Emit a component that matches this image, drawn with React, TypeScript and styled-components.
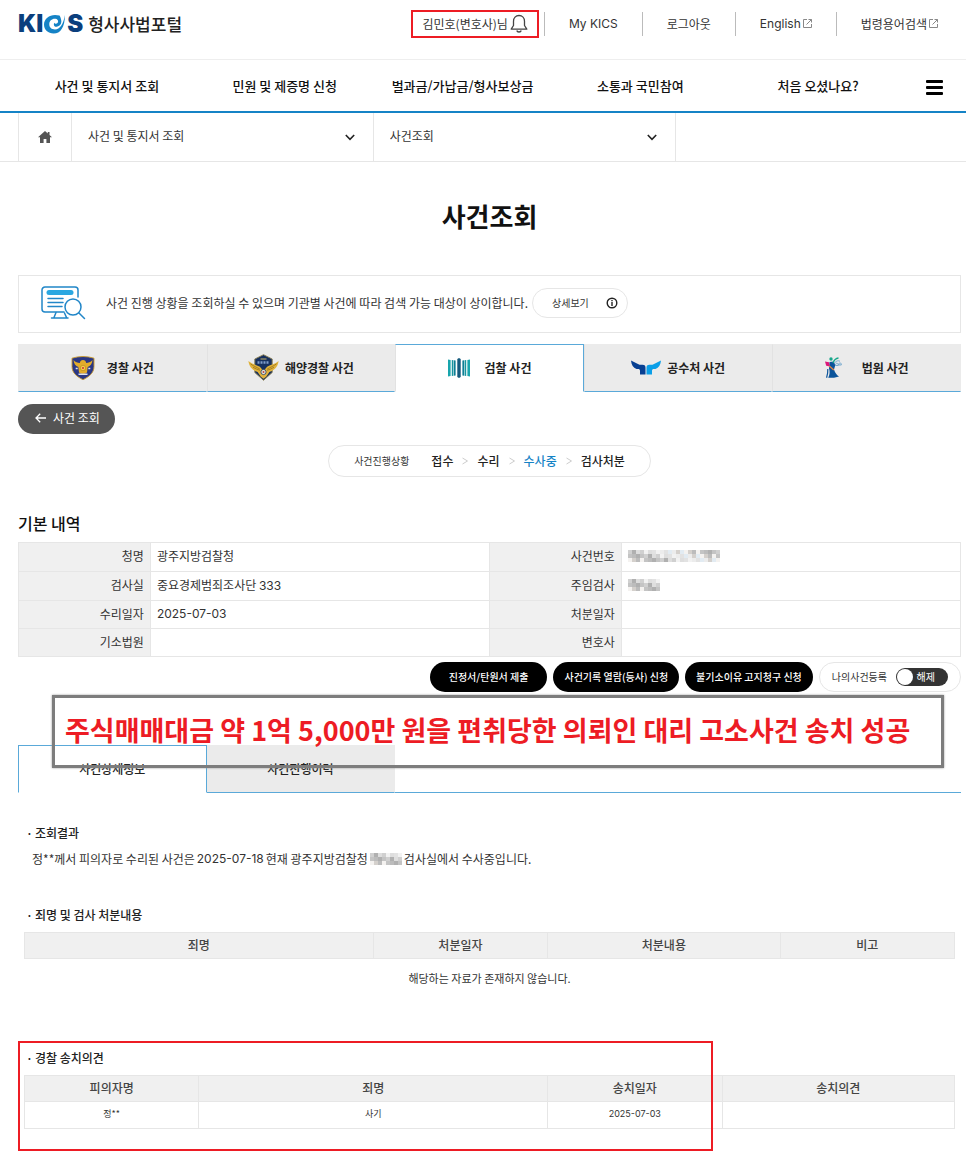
import React from "react";
import styled, { createGlobalStyle, css } from "styled-components";

const GlobalStyle = createGlobalStyle`
  *, *::before, *::after { box-sizing: border-box; }
  body {
    margin: 0;
    background: #fff;
    color: #333;
    font-family: "Noto Sans CJK KR", sans-serif;
    font-size: 12px;
    line-height: 18px;
  }
  button, select, input { font: inherit; color: inherit; margin: 0; }
  button { border: 0; padding: 0; background: none; cursor: pointer; }
  a { color: inherit; text-decoration: none; }
  h1, h2, h3, p, ul { margin: 0; padding: 0; }
  table { border-collapse: collapse; table-layout: fixed; width: 100%; }
  svg { display: block; flex: none; }
`;

const BLUE = "#1583c6";
const TAB_BLUE = "#5aa9d9";
const LINE = "#e6e6e6";
const RED = "#ed1c24";

const Page = styled.div`
  min-width: 900px;
  padding-bottom: 24px;
`;

const Latin = styled.span`
  font-family: Inter, sans-serif;
`;

/* ---------- header ---------- */

const Header = styled.header`
  display: flex;
  align-items: center;
  justify-content: space-between;
  height: 60px;
  padding: 0 28px 12px 18px;
  border-bottom: 1px solid #eee;
`;

const Logo = styled.a`
  display: flex;
  align-items: center;
  gap: 1px;
  color: #0b3f7d;
`;

const LogoLatin = styled.span`
  font: 900 24px/24px Inter, sans-serif;
`;

const LogoName = styled.span`
  margin-left: 4px;
  color: #222;
  font-size: 17px;
  line-height: 24px;
  font-weight: 500;
`;

const Utility = styled.nav`
  display: flex;
  align-items: center;
`;

const UserBox = styled.button`
  display: flex;
  align-items: center;
  gap: 2px;
  height: 28px;
  margin-right: 5px;
  padding: 0 9px;
  border: 2px solid ${RED};
`;

const UtilityLink = styled.a`
  display: flex;
  align-items: center;
  gap: 2px;
  height: 24px;
  padding: 0 24px;
  border-left: 1px solid #bbb;
  &:last-child { padding-right: 0; }
`;

/* ---------- main navigation ---------- */

const MainNav = styled.nav`
  display: grid;
  grid-template-columns: repeat(5, 1fr) 54px;
  align-items: center;
  height: 53px;
  padding: 0 5px 0 18px;
  border-bottom: 2px solid ${BLUE};
`;

const MainNavLink = styled.a`
  color: #111;
  text-align: center;
  font-size: 13px;
  line-height: 20px;
  font-weight: 500;
`;

const MenuButton = styled.button`
  display: grid;
  gap: 3px;
  justify-self: center;
  width: 17px;
  padding-top: 3px;
`;

const MenuBar = styled.span`
  height: 3px;
  border-radius: 1px;
  background: #000;
`;

/* ---------- breadcrumb ---------- */

const Breadcrumb = styled.nav`
  display: flex;
  height: 49px;
  padding: 0 5px 0 18px;
  border-bottom: 1px solid ${LINE};
`;

const HomeLink = styled.a`
  display: grid;
  place-items: center;
  width: 54px;
  border: solid ${LINE};
  border-width: 0 1px;
`;

const CrumbField = styled.label`
  display: flex;
  align-items: center;
  width: 32%;
  padding-right: 18px;
  border-right: 1px solid ${LINE};
`;

const CrumbSelect = styled.select`
  flex: 1;
  height: 46px;
  padding: 0 16px;
  border: 0;
  background: none;
  appearance: none;
  align-self: flex-start;
`;

/* ---------- content ---------- */

const Content = styled.main`
  padding: 0 5px 0 18px;
`;

const PageTitle = styled.h1`
  padding: 34px 0 39px;
  color: #111;
  text-align: center;
  font-size: 26px;
  line-height: 40px;
  font-weight: 700;
`;

const Notice = styled.section`
  display: flex;
  align-items: center;
  height: 58px;
  margin-bottom: 11px;
  padding: 0 0 2px 22px;
  border: 1px solid ${LINE};
`;

const NoticeText = styled.p`
  margin: 0 4px 0 20px;
`;

const DetailButton = styled.button`
  display: flex;
  align-items: center;
  gap: 17px;
  height: 30px;
  padding: 0 9px 0 19px;
  border: 1px solid ${LINE};
  border-radius: 15px;
  font-size: 10px;
`;

const tabShape = css<{ $active?: boolean }>`
  display: flex;
  align-items: center;
  justify-content: center;
  height: 48px;
  padding-bottom: 1px;
  border: 1px solid transparent;
  background: #ebebeb;
  color: #222;
  border-bottom-color: ${TAB_BLUE};
  ${(p) =>
    p.$active &&
    css`
      background: none;
      border-color: ${TAB_BLUE};
      border-bottom-color: transparent;
    `}
`;

const AgencyTabs = styled.div`
  display: grid;
  grid-template-columns: repeat(5, 1fr);
  margin-bottom: 12px;
`;

const AgencyTab = styled.button<{ $active?: boolean; $gap: number }>`
  ${tabShape}
  gap: ${(p) => p.$gap}px;
  font-weight: 700;
  & + & { border-left-color: ${(p) => (p.$active ? TAB_BLUE : "#e2e2e2")}; }
`;

const BackButton = styled.button`
  display: flex;
  align-items: center;
  gap: 7px;
  height: 30px;
  padding: 0 15px 2px 17px;
  border-radius: 15px;
  background: #555;
  color: #fff;
`;

const Progress = styled.div`
  display: flex;
  align-items: center;
  width: fit-content;
  height: 32px;
  margin: 11px auto 34px;
  padding: 0 25px 1px;
  border: 1px solid ${LINE};
  border-radius: 16px;
`;

const ProgressLabel = styled.span`
  margin-right: 22px;
  font-size: 10px;
`;

const Steps = styled.ol`
  display: flex;
  align-items: center;
  gap: 9px;
  margin: 0;
  padding: 0;
  list-style: none;
`;

const Step = styled.li<{ $current?: boolean }>`
  display: flex;
  align-items: center;
  gap: 9px;
  color: ${(p) => (p.$current ? BLUE : "#222")};
  font-weight: 500;
`;

const SectionTitle = styled.h2`
  margin-bottom: 7px;
  color: #111;
  font-size: 16px;
  line-height: 24px;
  font-weight: 500;
`;

const InfoTable = styled.table`
  th, td {
    height: 28px;
    padding: 0 6px 2px;
    border: 1px solid ${LINE};
    line-height: 18px;
  }
  tr:nth-child(-n + 2) > * { height: 29px; }
  th {
    width: 14%;
    background: #f0f0f0;
    text-align: right;
    font-weight: 400;
  }
  td { width: 36%; }
`;

const Actions = styled.div`
  display: flex;
  justify-content: flex-end;
  gap: 6px;
  margin: 5px 0 53px;
`;

const ActionButton = styled.button<{ $wide?: boolean }>`
  height: 30px;
  padding: 0 ${(p) => (p.$wide ? 19 : 11)}px 1px;
  border-radius: 15px;
  background: #000;
  color: #fff;
  font-size: 10px;
  font-weight: 500;
`;

const RegisterField = styled.label`
  display: flex;
  align-items: center;
  gap: 9px;
  height: 30px;
  padding: 0 12px;
  border: 1px solid ${LINE};
  border-radius: 15px;
  font-size: 10px;
`;

const Toggle = styled.span`
  position: relative;
  display: flex;
  align-items: center;
  justify-content: flex-end;
  width: 52px;
  height: 18px;
  padding-right: 13px;
  border-radius: 9px;
  background: #333;
  color: #fff;
`;

const ToggleInput = styled.input`
  position: absolute;
  left: 1px;
  top: 1px;
  width: 16px;
  height: 16px;
  appearance: none;
  border-radius: 8px;
  background: #fff;
  &:checked { left: 35px; }
`;

const DetailSection = styled.section`
  position: relative;
  margin-bottom: 31px;
`;

const DetailTabs = styled.div`
  display: grid;
  grid-template-columns: 1fr 1fr 3fr;
`;

const DetailTab = styled.button<{ $active?: boolean }>`
  ${tabShape}
  font-weight: 500;
  & + & { border-left: 0; }
`;

const TabRest = styled.span`
  border-bottom: 1px solid ${TAB_BLUE};
`;

const Caption = styled.p`
  position: absolute;
  left: 34px;
  right: 17px;
  top: -50px;
  height: 73px;
  padding: 12px 0 0 10px;
  border: 3px solid #7d7d7d;
  box-shadow: 0 0 2px #999;
  color: ${RED};
  font-size: 27px;
  line-height: 40px;
  font-weight: 700;
  white-space: nowrap;
`;

const Block = styled.section<{ $space: number }>`
  padding: 0 6px ${(p) => p.$space}px;
`;

const BlockTitle = styled.h3`
  display: flex;
  gap: 2px;
  padding-left: 2px;
  margin-bottom: 8px;
  color: #222;
  font-size: 12px;
  font-weight: 500;
`;

const ResultText = styled.p`
  display: flex;
  align-items: center;
  gap: 2px;
  padding-left: 8px;
`;

const DataTable = styled.table`
  th, td { border: 1px solid ${LINE}; padding: 0 0 2px; text-align: center; }
  th {
    height: 26px;
    background: #f0f0f0;
    color: #444;
    font-weight: 500;
  }
  td { height: 27px; font-size: 9px; }
`;

const EmptyText = styled.p`
  padding-top: 10px;
  text-align: center;
  font-size: 11px;
`;

const OpinionArea = styled.div`
  position: relative;
  padding-top: 8px;
`;

const Highlight = styled.div`
  position: absolute;
  inset: 0 auto 0 0;
  width: 73.7%;
  border: 2px solid ${RED};
  pointer-events: none;
`;

const OPINION_COLUMNS = ["18.75%", "37.5%", "18.75%", "25%"];
const CHARGE_COLUMNS = ["37.5%", "18.75%", "25%", "18.75%"];

/* ---------- drawings ---------- */

const Swirl = () => (
  <svg width="22" height="20" viewBox="0 0 22 20" fill="none" aria-hidden="true">
    <path d="M15.500 1.600C8-.9 0 3.300 0 10.600 0 16 4.200 19.600 9.600 19.600c7 0 11.200-6.600 11.400-18.600-1.800 9.300-5 14.500-10 14.500-3.500 0-5.700-2-5.700-5.200 0-3.500 2.700-5.900 6.200-5.500 2.400.3 3.300 2.600 2 4.200-.9 1.200-2.700 1-3-.2-1.600 1.900-.1 4.300 2.300 4 3-.4 4.900-3 4.500-6-.2-2.100-1-4-1.800-5.200z" fill="#1583c6" />
  </svg>
);

const Bell = () => (
  <svg width="18" height="20" viewBox="0 0 18 20" fill="none" stroke="#444" strokeWidth="1.300" strokeLinejoin="round" aria-hidden="true">
    <path d="M9 1.500c-3.300 0-5.500 2.500-5.500 5.700v4.300L1.200 15.200h15.600l-2.300-3.700V7.200c0-3.200-2.200-5.700-5.500-5.700z" />
    <path d="M6.800 16.500c.4 2 4 2 4.400 0" />
  </svg>
);

const External = () => (
  <svg width="9" height="9" viewBox="0 0 9 9" fill="none" stroke="#888" aria-hidden="true">
    <path d="M4 .5H.5v8h8V5M5.500.5h3v3M8.500.5L3.500 5.500" />
  </svg>
);

const Home = () => (
  <svg width="14" height="12" viewBox="0 0 14 12" fill="#555" aria-hidden="true">
    <path d="M7 0L0 6.300h2V12h3.600V8h2.800v4H12V6.300h2L11.500 4V1H9.800v1.500z" />
  </svg>
);

const Chevron = () => (
  <svg width="10" height="7" viewBox="0 0 10 7" fill="none" stroke="#222" strokeWidth="1.600" aria-hidden="true">
    <path d="M.8 1L5 5.300 9.200 1" />
  </svg>
);

const MonitorSearch = () => (
  <svg width="45" height="34" viewBox="0 0 45 34" fill="none" stroke="#2186c8" strokeWidth="1.500" strokeLinecap="round" aria-hidden="true">
    <path d="M23 26H4a3 3 0 0 1-3-3V4a3 3 0 0 1 3-3h30a3 3 0 0 1 3 3v7" />
    <path d="M8 6.500h22" stroke="#2aa7e1" strokeWidth="5" />
    <path d="M7 12.500h15M7 16.500h15M7 20.500h14" />
    <path d="M15 26.500l-2 5M23.500 27l2 4.500M10.500 32h16.500" />
    <circle cx="32" cy="21" r="8" />
    <path d="M38 27l5.500 5.500" />
  </svg>
);

const Info = () => (
  <svg width="12" height="12" viewBox="0 0 12 12" fill="none" stroke="#222" strokeWidth="1.400" aria-hidden="true">
    <circle cx="6" cy="6" r="4.800" />
    <path d="M6 5v4M6 3v1.200" />
  </svg>
);

const ArrowLeft = () => (
  <svg width="11" height="10" viewBox="0 0 11 10" fill="none" stroke="#fff" strokeWidth="1.300" aria-hidden="true">
    <path d="M11 5H1.200M5.200.8L1 5l4.200 4.200" />
  </svg>
);

const StepArrow = () => (
  <svg width="6" height="8" viewBox="0 0 6 8" fill="none" stroke="#ccc" aria-hidden="true">
    <path d="M.5 1l5 3-5 3" />
  </svg>
);

const PoliceIcon = () => (
  <svg width="24" height="24" viewBox="0 0 24 24" aria-hidden="true">
    <path d="M1 2.200Q12-1.200 23 2.200v8.300c0 6.500-5 10.200-11 13.200C6 20.700 1 17 1 10.500z" fill="#2a3784" stroke="#c99a2d" strokeWidth=".9" />
    <path d="M2.500 4c2 2.300 4 3 6.300 3 .3-2 1.400-3 3.200-3s2.900 1 3.200 3c2.300 0 4.300-.7 6.300-3-.3 3.700-2 6-4.800 7l-.7 5.500c-2 1.700-6 1.700-8 0L7.300 11c-2.800-1-4.500-3.300-4.800-7z" fill="#e3ac2b" />
    <circle cx="12" cy="12" r="2.700" fill="#f5cc4b" stroke="#a67712" strokeWidth=".5" />
    <circle cx="12" cy="12" r="1.100" fill="#cf3b3b" />
    <path d="M4.700 12.500h2M17.300 12.500h2M7.500 18.300h9" stroke="#dfe2ee" strokeWidth="1.500" />
  </svg>
);

const CoastGuardIcon = () => (
  <svg width="31" height="27" viewBox="0 0 31 27" aria-hidden="true">
    <path d="M15.500.7l8.700 4.300v13.500l-8.700 7.800-8.700-7.800V5z" fill="#17305f" stroke="#8b8051" strokeWidth=".9" />
    <path d="M.4 7c3.500 3.200 7.600 3.300 11.500 5.800L15.500 17l3.600-4.200c3.900-2.500 8-2.600 11.500-5.800-.7 5.700-4 9.300-9.200 11l-3.200 4.700-2.700 2-2.700-2L9.600 18C4.400 16.300 1.100 12.700.4 7z" fill="#e0b23b" />
    <path d="M2.500 9.800c3 2.400 5.500 3.200 9.300 5.200M5 13.300c2.300 1.500 4.300 2 7 3M28.500 9.800c-3 2.400-5.500 3.200-9.300 5.200M26 13.300c-2.300 1.500-4.300 2-7 3" fill="none" stroke="#8f6c15" strokeWidth=".7" />
    <path d="M9.500 8.500h12" stroke="#7f9ccc" strokeWidth="2.500" strokeDasharray="2 1" />
    <path d="M12.500 5h6" stroke="#c9b46a" />
    <circle cx="15.500" cy="18" r="2.600" fill="#e8ead9" stroke="#233a61" strokeWidth=".8" />
    <circle cx="15.500" cy="18" r="1" fill="#bf4040" />
  </svg>
);

const ProsecutorIcon = () => (
  <svg width="22" height="20" viewBox="0 0 22 20" aria-hidden="true">
    <path d="M0 1.500l2.600.5v16L0 18.500zM22 1.500l-2.600.5v16l2.600.5z" fill="#18a5ad" />
    <path d="M3.800 2l1.600.3v15.400l-1.600.3zM18.200 2l-1.600.3v15.400l1.600.3z" fill="#18949f" />
    <path d="M5.900 2.300l1.700.2v15l-1.700.2zM16.100 2.300l-1.700.2v15l1.700.2z" fill="#0e7f95" />
    <path d="M9.300.9L11 0l1.700.9v18.200L11 20l-1.700-.9z" fill="#155a7d" />
  </svg>
);

const CioIcon = () => (
  <svg width="30" height="15" viewBox="0 0 30 15" aria-hidden="true">
    <path d="M0 .5l8.500 4.300h3c2.300 0 3 .9 3 3V14.500H9V11c0-1.400-.6-2-2-2H5.500C2.200 7.600.4 5 0 .5z" fill="#073f92" />
    <path d="M30 .5l-8.500 4.300h-3c-2.300 0-3 .9-3 3v6.700H21V11c0-1.400.6-2 2-2h1.500c3.300-1.400 5.100-4 5.500-8.500z" fill="#0a9fe8" />
  </svg>
);

const CourtIcon = () => (
  <svg width="17" height="21" viewBox="0 0 17 21" fill="none" aria-hidden="true">
    <circle cx="6" cy="2" r="1.700" fill="#18a78b" />
    <path d="M4.500 5L9 4.500l1.200 4L9 12.500c1 3 2.500 5.500 5 7L9 20.700H3.200c1.600-3 1.800-6 .8-9.200z" fill="#0b549b" />
    <path d="M1.600 20.700c1-3.200 1.400-5.500 1.200-8.700" stroke="#0b549b" strokeWidth="1.200" />
    <path d="M0 4.500l4 .7.800 4.300L1.200 8.700z" fill="#dd1779" />
    <path d="M4.300 9l4.500 4" stroke="#e98740" strokeWidth="1.200" />
    <path d="M8 6c1-3 3-4.700 5.500-5" stroke="#18a78b" strokeWidth="1.300" />
    <path d="M10 5.500c1.500-1.800 3.200-2 5-1.300M10.500 8.500c0-1.500.6-2.300 1.400-2.300s1.300.8 1.400 2.300zM13.800 8c0-1.500.5-2.200 1.200-2.200s1.200.7 1.300 2.200z" stroke="#5a9ac8" strokeWidth=".8" />
  </svg>
);

const SHADES = ["#d0d0d0", "#ececec", "#bcbcbc", "#dedede", "#e2ebf2", "#c4c4c4", "#f2f2f2", "#d4d0cc", "#b0b0b0", "#e2e2e2", "#f4f2f0"];

/* Hidden personal data: a block mosaic of neutral tones. */
const Mosaic = ({ columns, label }: { columns: number; label: string }) => (
  <svg width={columns * 4} height="14" viewBox={`0 0 ${columns * 4} 14`} role="img" aria-label={label}>
    {Array.from({ length: columns * 3 }, (_, i) => {
      const column = i % columns;
      const row = Math.floor(i / columns);
      return (
        <rect
          key={i}
          x={column * 4}
          y={1 + row * 4}
          width="4"
          height="4"
          fill={SHADES[(column * 7 + row * 5 + ((column * column) % 4)) % SHADES.length]}
        />
      );
    })}
  </svg>
);

/* ---------- data ---------- */

const NAV_ITEMS = ["사건 및 통지서 조회", "민원 및 제증명 신청", "벌과금/가납금/형사보상금", "소통과 국민참여", "처음 오셨나요?"];

const AGENCIES = [
  { name: "경찰 사건", icon: <PoliceIcon />, gap: 12 },
  { name: "해양경찰 사건", icon: <CoastGuardIcon />, gap: 6 },
  { name: "검찰 사건", icon: <ProsecutorIcon />, gap: 15, active: true },
  { name: "공수처 사건", icon: <CioIcon />, gap: 6 },
  { name: "법원 사건", icon: <CourtIcon />, gap: 20 },
];

const STEPS = ["접수", "수리", "수사중", "검사처분"];

const Columns = ({ widths }: { widths: string[] }) => (
  <colgroup>
    {widths.map((width, i) => (
      <col key={i} width={width} />
    ))}
  </colgroup>
);

export default function App() {
  return (
    <Page>
      <GlobalStyle />
      <Header>
        <Logo href="#">
          <LogoLatin>KI</LogoLatin>
          <Swirl />
          <LogoLatin>S</LogoLatin>
          <LogoName>형사사법포털</LogoName>
        </Logo>
        <Utility>
          <UserBox type="button">
            김민호(변호사)님
            <Bell />
          </UserBox>
          <UtilityLink href="#">
            <Latin>My KICS</Latin>
          </UtilityLink>
          <UtilityLink href="#">로그아웃</UtilityLink>
          <UtilityLink href="#">
            <Latin>English</Latin>
            <External />
          </UtilityLink>
          <UtilityLink href="#">
            법령용어검색
            <External />
          </UtilityLink>
        </Utility>
      </Header>

      <MainNav>
        {NAV_ITEMS.map((item) => (
          <MainNavLink key={item} href="#">
            {item}
          </MainNavLink>
        ))}
        <MenuButton type="button" aria-label="전체 메뉴">
          <MenuBar />
          <MenuBar />
          <MenuBar />
        </MenuButton>
      </MainNav>

      <Breadcrumb>
        <HomeLink href="#" aria-label="홈">
          <Home />
        </HomeLink>
        <CrumbField>
          <CrumbSelect aria-label="대메뉴">
            <option>사건 및 통지서 조회</option>
          </CrumbSelect>
          <Chevron />
        </CrumbField>
        <CrumbField>
          <CrumbSelect aria-label="하위 메뉴">
            <option>사건조회</option>
          </CrumbSelect>
          <Chevron />
        </CrumbField>
      </Breadcrumb>

      <Content>
        <PageTitle>사건조회</PageTitle>

        <Notice>
          <MonitorSearch />
          <NoticeText>사건 진행 상황을 조회하실 수 있으며 기관별 사건에 따라 검색 가능 대상이 상이합니다.</NoticeText>
          <DetailButton type="button">
            상세보기
            <Info />
          </DetailButton>
        </Notice>

        <AgencyTabs role="tablist">
          {AGENCIES.map((agency) => (
            <AgencyTab
              key={agency.name}
              type="button"
              role="tab"
              aria-selected={!!agency.active}
              $active={agency.active}
              $gap={agency.gap}
            >
              {agency.icon}
              {agency.name}
            </AgencyTab>
          ))}
        </AgencyTabs>

        <BackButton type="button">
          <ArrowLeft />
          사건 조회
        </BackButton>

        <Progress>
          <ProgressLabel>사건진행상황</ProgressLabel>
          <Steps>
            {STEPS.map((step, i) => (
              <Step key={step} $current={step === "수사중"}>
                {i > 0 && <StepArrow />}
                {step}
              </Step>
            ))}
          </Steps>
        </Progress>

        <SectionTitle>기본 내역</SectionTitle>
        <InfoTable>
          <tbody>
            <tr>
              <th scope="row">청명</th>
              <td>광주지방검찰청</td>
              <th scope="row">사건번호</th>
              <td>
                <Mosaic columns={23} label="비공개 사건번호" />
              </td>
            </tr>
            <tr>
              <th scope="row">검사실</th>
              <td>
                중요경제범죄조사단 <Latin>333</Latin>
              </td>
              <th scope="row">주임검사</th>
              <td>
                <Mosaic columns={8} label="비공개 이름" />
              </td>
            </tr>
            <tr>
              <th scope="row">수리일자</th>
              <td>
                <Latin>2025-07-03</Latin>
              </td>
              <th scope="row">처분일자</th>
              <td />
            </tr>
            <tr>
              <th scope="row">기소법원</th>
              <td />
              <th scope="row">변호사</th>
              <td />
            </tr>
          </tbody>
        </InfoTable>

        <Actions>
          <ActionButton type="button" $wide>
            진정서/탄원서 제출
          </ActionButton>
          <ActionButton type="button">사건기록 열람(등사) 신청</ActionButton>
          <ActionButton type="button">불기소이유 고지청구 신청</ActionButton>
          <RegisterField>
            나의사건등록
            <Toggle>
              <ToggleInput type="checkbox" role="switch" />
              해제
            </Toggle>
          </RegisterField>
        </Actions>

        <DetailSection>
          <DetailTabs role="tablist">
            <DetailTab type="button" role="tab" aria-selected="true" $active>
              사건상세정보
            </DetailTab>
            <DetailTab type="button" role="tab" aria-selected="false">
              사건진행이력
            </DetailTab>
            <TabRest />
          </DetailTabs>
          <Caption>주식매매대금 약 1억 5,000만 원을 편취당한 의뢰인 대리 고소사건 송치 성공</Caption>
        </DetailSection>

        <Block $space={38}>
          <BlockTitle>
            <span>·</span>조회결과
          </BlockTitle>
          <ResultText>
            <span>정**께서 피의자로 수리된 사건은</span>
            <Latin>2025-07-18</Latin>
            <span>현재 광주지방검찰청</span>
            <Mosaic columns={8} label="비공개 이름" />
            <span>검사실에서 수사중입니다.</span>
          </ResultText>
        </Block>

        <Block $space={54}>
          <BlockTitle>
            <span>·</span>죄명 및 검사 처분내용
          </BlockTitle>
          <DataTable>
            <Columns widths={CHARGE_COLUMNS} />
            <thead>
              <tr>
                <th>죄명</th>
                <th>처분일자</th>
                <th>처분내용</th>
                <th>비고</th>
              </tr>
            </thead>
          </DataTable>
          <EmptyText>해당하는 자료가 존재하지 않습니다.</EmptyText>
        </Block>

        <OpinionArea>
          <Block $space={22}>
            <BlockTitle>
              <span>·</span>경찰 송치의견
            </BlockTitle>
            <DataTable>
              <Columns widths={OPINION_COLUMNS} />
              <thead>
                <tr>
                  <th>피의자명</th>
                  <th>죄명</th>
                  <th>송치일자</th>
                  <th>송치의견</th>
                </tr>
              </thead>
              <tbody>
                <tr>
                  <td>정**</td>
                  <td>사기</td>
                  <td>
                    <Latin>2025-07-03</Latin>
                  </td>
                  <td />
                </tr>
              </tbody>
            </DataTable>
          </Block>
          <Highlight />
        </OpinionArea>
      </Content>
    </Page>
  );
}
